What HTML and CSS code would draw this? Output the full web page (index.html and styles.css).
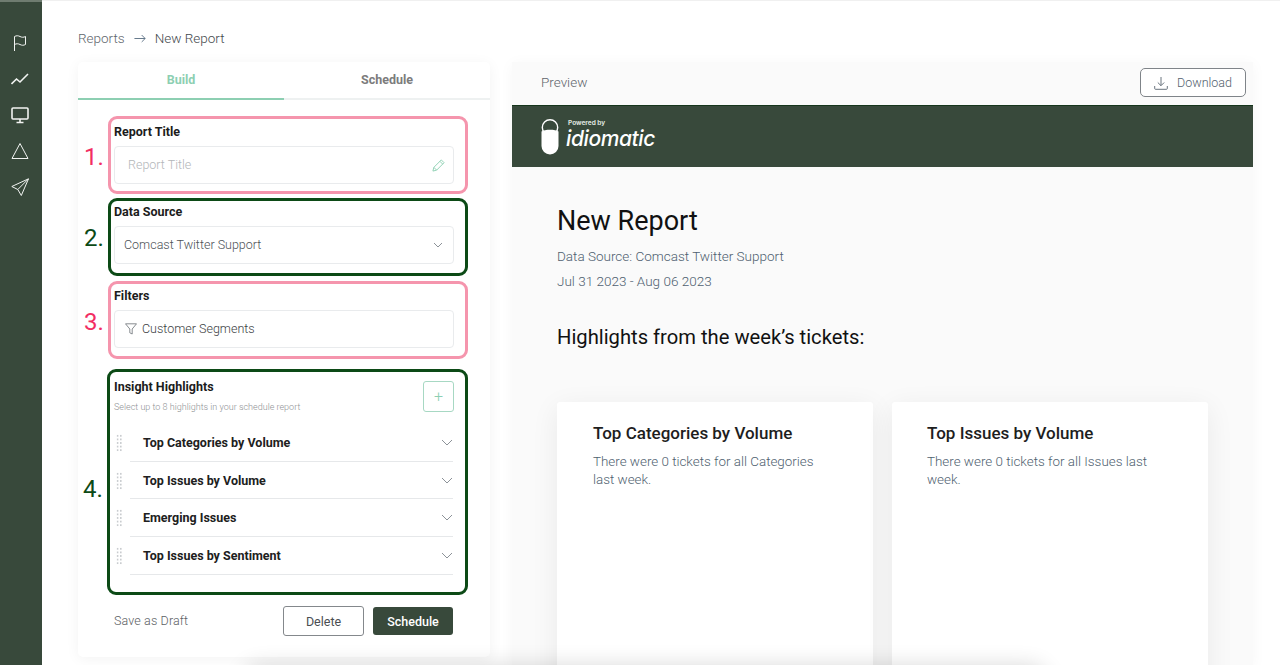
FILE: index.html
```html
<!DOCTYPE html>
<html lang="en">
<head>
<meta charset="utf-8">
<title>New Report</title>
<link rel="stylesheet" href="styles.css">
</head>
<body>
<div class="app">
  <nav class="sidebar">
    <svg class="nav-icon" viewBox="0 0 18 18"><path d="M3.500 17V2.500c2-1 3.500-1 5.500 0s3.500 1 5.500 0v8c-2 1-3.500 1-5.500 0s-3.500-1-5.500 0"/></svg>
    <svg class="nav-icon" viewBox="0 0 18 18"><path class="thick" d="M0.500 14l5-5 3.500 3 8-8"/></svg>
    <svg class="nav-icon" viewBox="0 0 18 18"><rect class="thick" x="1" y="2" width="16" height="11" rx="1"/><path class="thick" d="M9 13v3M5.500 16.500h7"/></svg>
    <svg class="nav-icon" viewBox="0 0 18 18"><path d="M9 1.500 17 16.500H1z"/></svg>
    <svg class="nav-icon" viewBox="0 0 18 18"><path d="M17.500 0.800 0.800 8.500l6 3 3.500 6zM6.800 11.500 17.500 0.800"/></svg>
  </nav>
  <main class="main">
    <div class="crumbs">
      <span>Reports</span>
      <svg class="crumb-arrow" viewBox="0 0 14 10"><path d="M0.500 5h12.500M9 1l4 4-4 4"/></svg>
      <span class="crumb-current">New Report</span>
    </div>
    <div class="panels">
      <section class="builder">
        <div class="tabs">
          <div class="tab tab-active">Build</div>
          <div class="tab">Schedule</div>
        </div>
        <div class="form">
          <div class="box box-pink box-a">
            <span class="num num-pink">1.</span>
            <div class="label">Report Title</div>
            <div class="field field-placeholder">
              <span class="field-text">Report Title</span>
              <svg class="pencil" viewBox="0 0 14 14"><path d="M1 13l1-4L10 1l3 3-8 8zM2 9l3 3M8.500 2.500l3 3"/></svg>
            </div>
          </div>
          <div class="box box-green box-b">
            <span class="num num-green">2.</span>
            <div class="label">Data Source</div>
            <div class="field field-select">
              <span class="field-text">Comcast Twitter Support</span>
              <svg class="chev-small" viewBox="0 0 10 6"><path d="M1 1l4 4 4-4"/></svg>
            </div>
          </div>
          <div class="box box-pink box-c">
            <span class="num num-pink">3.</span>
            <div class="label">Filters</div>
            <div class="field field-filter">
              <svg class="funnel" viewBox="0 0 12 12"><path d="M0.500 0.800h11L7.200 6v5L4.800 9.800V6z"/></svg>
              <span class="field-text">Customer Segments</span>
            </div>
          </div>
          <div class="box box-green box-d">
            <span class="num num-green">4.</span>
            <div class="insight-head">
              <div>
                <div class="label">Insight Highlights</div>
                <div class="hint">Select up to 8 highlights in your schedule report</div>
              </div>
              <div class="plus">+</div>
            </div>
            <div class="row"><span class="grip"></span><div class="row-body"><span>Top Categories by Volume</span><svg class="chev" viewBox="0 0 12 7"><path d="M1 1l5 5 5-5"/></svg></div></div>
            <div class="row"><span class="grip"></span><div class="row-body"><span>Top Issues by Volume</span><svg class="chev" viewBox="0 0 12 7"><path d="M1 1l5 5 5-5"/></svg></div></div>
            <div class="row"><span class="grip"></span><div class="row-body"><span>Emerging Issues</span><svg class="chev" viewBox="0 0 12 7"><path d="M1 1l5 5 5-5"/></svg></div></div>
            <div class="row"><span class="grip"></span><div class="row-body"><span>Top Issues by Sentiment</span><svg class="chev" viewBox="0 0 12 7"><path d="M1 1l5 5 5-5"/></svg></div></div>
          </div>
          <div class="actions">
            <span class="draft">Save as Draft</span>
            <button class="btn btn-outline">Delete</button>
            <button class="btn btn-solid">Schedule</button>
          </div>
        </div>
      </section>
      <section class="preview">
        <div class="preview-bar">
          <span class="preview-label">Preview</span>
          <button class="download">
            <svg class="download-icon" viewBox="0 0 14 14"><path d="M7 1v8.500M3.800 6.500 7 9.700l3.200-3.200M0.700 10v2.500c0 .5.300.8.800.8h11c.5 0 .8-.3.800-.8V10"/></svg>
            Download
          </button>
        </div>
        <div class="banner">
          <svg class="lock" viewBox="0 0 18 36"><circle cx="9" cy="8.500" r="7.700"/><path class="lock-body" d="M0.500 12.500c3-2.500 14-2.500 17 0V27a8.500 8.500 0 0 1-17 0z"/></svg>
          <div class="brand">
            <div class="powered">Powered by</div>
            <div class="wordmark">idiomatic</div>
          </div>
        </div>
        <div class="doc">
          <h1>New Report</h1>
          <p class="meta">Data Source: Comcast Twitter Support</p>
          <p class="meta">Jul 31 2023 - Aug 06 2023</p>
          <h2>Highlights from the week’s tickets:</h2>
          <div class="cards">
            <article class="card">
              <h3>Top Categories by Volume</h3>
              <p>There were 0 tickets for all Categories last week.</p>
            </article>
            <article class="card">
              <h3>Top Issues by Volume</h3>
              <p>There were 0 tickets for all Issues last week.</p>
            </article>
          </div>
        </div>
      </section>
    </div>
  </main>
</div>
<div class="bottom-shadow"></div>
</body>
</html>
```

FILE: styles.css
```css
* { box-sizing: border-box; }
html, body { margin: 0; height: 665px; overflow: hidden; background: #fff; }
body { font-family: Roboto, "Liberation Sans", sans-serif; color: #1c1c1c; position: relative; }
.app { display: flex; height: 665px; overflow: hidden; }
.sidebar { width: 42px; flex: none; background: #38493b; display: flex; flex-direction: column; align-items: center; gap: 18px; padding-top: 32px; padding-right: 3px; border-top: 2px solid #6f7c70; }
.nav-icon { width: 18px; height: 18px; fill: none; stroke: #f2f4f2; stroke-width: 1; }
.nav-icon .thick { stroke-width: 1.6; }
.main { flex: 1; min-width: 0; padding: 0 0 0 36px; border-top: 1px solid #f0f0f0; }
.crumbs { height: 61px; padding-top: 28px; display: flex; align-items: flex-start; font-size: 13.500px; line-height: 19px; font-weight: 300; color: #60666c; }
.crumb-arrow { width: 12px; height: 9px; margin: 5px 9px 0 9px; fill: none; stroke: #5f7386; stroke-width: 1.100; }
.crumb-current { font-weight: 300; color: #44494d; }
.panels { display: flex; gap: 22px; align-items: flex-start; }
.builder { width: 412px; height: 595px; flex: none; background: #fff; border-radius: 5px; box-shadow: 0 2px 14px rgba(0,0,0,.05); }
.tabs { display: flex; height: 38px; border-bottom: 2px solid #eef1f1; }
.tab { flex: 1; height: 38px; text-align: center; font-size: 12.500px; line-height: 36px; font-weight: 700; color: #7c7c7c; }
.tab-active { color: #8dcfb2; border-bottom: 2px solid #8dcfb2; }
.form { padding: 16px 22px 0 29px; display: flex; flex-direction: column; }
.box { position: relative; width: 360px; border: 3px solid; border-radius: 9px; padding: 0 11px 0 3px; margin-left: 1px; }
.box-pink { border-color: #f595ad; }
.box-green { border-color: #0c4a16; }
.box-a { height: 78px; padding-top: 3px; }
.box-b { height: 78px; margin-top: 4px; padding-top: 1px; }
.box-c { height: 78px; margin-top: 5px; padding-top: 2px; }
.box-d { height: 226px; margin-top: 10px; margin-left: 0; width: 361px; padding: 0 11px 0 4px; }
.num { position: absolute; left: -27px; font-size: 24px; line-height: 28px; font-weight: 400; }
.num-pink { color: #f22e63; top: 24px; }
.num-green { color: #0c4a16; top: 23px; }
.box-d .num { top: 103px; left: -27px; }
.label { font-size: 12.500px; line-height: 20px; font-weight: 700; color: #1c1c1c; }
.field { height: 38px; margin-top: 4px; border: 1px solid #e9ebed; border-radius: 4px; display: flex; align-items: center; font-size: 12.500px; font-weight: 300; color: #3c4144; }
.field-text { margin-bottom: 2px; }
.field-placeholder { padding: 0 8px 0 13px; justify-content: space-between; color: #b3b6b9; }
.field-select { padding: 0 10px 0 9px; justify-content: space-between; color: #4d5257; }
.field-filter { padding: 0 0 0 10px; gap: 5px; }
.pencil { width: 13px; height: 13px; fill: none; stroke: #8dcfb2; stroke-width: 1; }
.chev-small { width: 10px; height: 6px; fill: none; stroke: #8c9298; stroke-width: 1; }
.funnel { width: 12px; height: 12px; fill: none; stroke: #6a7075; stroke-width: 0.800; }
.insight-head { display: flex; justify-content: space-between; padding-top: 5px; height: 48px; }
.hint { font-size: 9px; line-height: 12px; margin-top: 4px; font-weight: 300; color: #8f9295; }
.plus { width: 31px; height: 31px; margin-top: 4px; border: 1px solid #a7d8c3; border-radius: 3px; display: flex; align-items: center; justify-content: center; color: #8dcfb2; font-size: 16px; font-weight: 300; line-height: 1; }
.row { display: flex; height: 37.700px; }
.insight-head + .row { margin-top: 4px; }
.grip { width: 7px; height: 18px; flex: none; margin: 10px 0 0 2px; background-image: radial-gradient(circle, #c9cccf 1px, transparent 1.100px); background-size: 3.200px 3.600px; }
.row-body { flex: 1; margin: 0 1px 0 7px; padding: 0 0 0 13px; border-bottom: 1px solid #e6e8ea; display: flex; justify-content: space-between; align-items: center; font-size: 12.500px; font-weight: 700; color: #202020; }
.chev { width: 12px; height: 7px; fill: none; stroke: #8c9298; stroke-width: 1; }
.actions { display: flex; align-items: center; height: 30px; margin-top: 11px; padding: 0 15px 0 7px; }
.draft { font-size: 12.500px; font-weight: 300; color: #5c6064; letter-spacing: .13px; margin-right: auto; margin-bottom: 1px; }
.btn { font-family: inherit; font-size: 12.500px; border-radius: 3px; padding: 0; }
.btn-outline { width: 81px; height: 30px; background: #fff; border: 1px solid #84888c; color: #4a4e52; font-weight: 400; }
.btn-solid { width: 80px; height: 28px; margin-left: 9px; background: #38493b; border: 0; color: #fff; font-weight: 500; }
.preview { width: 741px; flex: none; height: 604px; background: #fafafa; box-shadow: 0 2px 14px rgba(0,0,0,.04); }
.preview-bar { height: 43px; display: flex; justify-content: space-between; align-items: center; padding: 0 7px 2px 29px; font-size: 13.500px; font-weight: 300; color: #5f666c; }
.preview-label { margin-bottom: 2px; }
.download { width: 106px; height: 29px; background: #fff; border: 1px solid #7f8489; border-radius: 5px; font-family: inherit; font-size: 12.500px; font-weight: 300; color: #53616e; display: flex; align-items: center; justify-content: center; gap: 9px; padding: 0; }
.download-icon { width: 14px; height: 14px; fill: none; stroke: #5a6570; stroke-width: 0.900; }
.banner { height: 62px; background: #38493b; display: flex; align-items: center; gap: 9px; padding: 0 0 0 29px; border-top: 1px solid #16351c; }
.lock { width: 18px; height: 36px; fill: none; stroke: #fff; stroke-width: 1.400; }
.lock-body { fill: #fff; stroke: none; }
.brand { color: #fff; margin-top: -5px; }
.powered { font-size: 6.500px; line-height: 8px; font-weight: 700; color: #dfe3df; font-family: Inter, sans-serif; }
.wordmark { margin-left: -2px; font-family: Inter, sans-serif; font-style: italic; font-size: 21px; line-height: 23px; font-weight: 500; letter-spacing: -.4px; }
.doc { padding: 37px 45px 0; }
.doc h1 { margin: 0 0 9px; font-size: 27px; line-height: 34px; font-weight: 400; color: #111; }
.meta { margin: 0 0 6.500px; font-size: 13.500px; line-height: 18.500px; font-weight: 300; color: #4f5f70; }
.doc h2 { margin: 33.500px 0 0; font-size: 20.200px; line-height: 26px; font-weight: 400; color: #111; }
.cards { display: grid; grid-template-columns: 316px 316px; column-gap: 19px; margin-top: 51.500px; }
.card { height: 290px; background: #fff; border-radius: 3px; padding: 21px 36px 0; box-shadow: 0 6px 28px rgba(0,0,0,.07); }
.card + .card { padding-left: 35px; }
.card h3 { margin: 0; font-size: 17px; line-height: 21px; font-weight: 500; color: #1e1e1e; }
.card p { margin: 9px 0 0; font-size: 13.400px; line-height: 18px; font-weight: 300; color: #4f5f70; }
.bottom-shadow { position: absolute; left: 250px; top: 672px; width: 790px; height: 30px; border-radius: 10px; box-shadow: 0 0 22px 6px rgba(0,0,0,.16); }
```
